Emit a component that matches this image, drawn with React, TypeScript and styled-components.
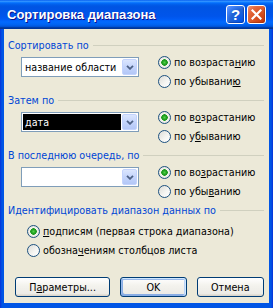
import React from "react";
import styled, { createGlobalStyle } from "styled-components";

const GlobalStyle = createGlobalStyle`
  html, body {
    margin: 0;
    padding: 0;
    background: #ffffff;
  }
  body {
    font-family: "DejaVu Sans Condensed", "DejaVu Sans", Verdana, sans-serif;
    font-size: 10.7px;
    color: #000000;
  }
  u {
    text-decoration: underline;
    text-underline-offset: 1px;
  }
`;

type RadioProps = {
  checked?: boolean;
  children: React.ReactNode;
};

const Radio = ({ checked, children }: RadioProps) => (
  <S.RadioRow>
    <S.RadioCircle checked={!!checked} />
    <S.RadioLabel>{children}</S.RadioLabel>
  </S.RadioRow>
);

type ComboProps = {
  value: string;
  selected?: boolean;
};

const Combo = ({ value, selected }: ComboProps) => (
  <S.Combo>
    <S.ComboText selected={!!selected}>{value}</S.ComboText>
    <S.ComboButton>
      <svg width="8" height="5" viewBox="0 0 8 5">
        <path d="M1 0.8 L4 3.8 L7 0.8" fill="none" stroke="#4d6185" strokeWidth="1.8" />
      </svg>
    </S.ComboButton>
  </S.Combo>
);

type SortGroupProps = {
  title: string;
  value: string;
  selected?: boolean;
  asc: React.ReactNode;
  desc: React.ReactNode;
};

const SortGroup = ({ title, value, selected, asc, desc }: SortGroupProps) => (
  <S.Group>
    <S.Header>
      <span>{title}</span>
      <S.Line />
    </S.Header>
    <S.SortRow>
      <Combo value={value} selected={selected} />
      <S.RadioColumn>
        <Radio checked>{asc}</Radio>
        <Radio>{desc}</Radio>
      </S.RadioColumn>
    </S.SortRow>
  </S.Group>
);

const App = () => {
  return (
    <>
      <GlobalStyle />
      <S.Window>
        <S.TitleBar>
          <S.Title>Сортировка диапазона</S.Title>
          <S.TitleButtons>
            <S.HelpButton>?</S.HelpButton>
            <S.CloseButton>
              <svg width="11" height="11" viewBox="0 0 11 11">
                <path d="M1.5 1.5 L9.5 9.5 M9.5 1.5 L1.5 9.5" stroke="#ffffff" strokeWidth="2.2" strokeLinecap="square" />
              </svg>
            </S.CloseButton>
          </S.TitleButtons>
        </S.TitleBar>
        <S.Body>
          <SortGroup
            title="Сортировать по"
            value="название области"
            asc={<>по возраста<u>н</u>ию</>}
            desc={<>по убывани<u>ю</u></>}
          />
          <SortGroup
            title="Затем по"
            value="дата"
            selected
            asc={<>по в<u>о</u>зрастанию</>}
            desc={<>по у<u>б</u>ыванию</>}
          />
          <SortGroup
            title="В последнюю очередь, по"
            value=""
            asc={<>по во<u>з</u>растанию</>}
            desc={<>по убы<u>в</u>анию</>}
          />
          <S.Group>
            <S.Header>
              <span>Идентифицировать диапазон данных по</span>
              <S.Line />
            </S.Header>
            <S.IdentColumn>
              <Radio checked>
                <u>п</u>одписям (первая строка диапазона)
              </Radio>
              <Radio>
                обозна<u>ч</u>ениям столбцов листа
              </Radio>
            </S.IdentColumn>
          </S.Group>
          <S.ButtonRow>
            <S.Button width={96}>
              П<u>а</u>раметры...
            </S.Button>
            <S.Button width={67} isDefault>
              OK
            </S.Button>
            <S.Button width={68}>Отмена</S.Button>
          </S.ButtonRow>
        </S.Body>
      </S.Window>
    </>
  );
};

const S = {
  Window: styled.div`
    width: 273px;
    height: 308px;
    display: flex;
    flex-direction: column;
    background: linear-gradient(90deg, #0831d9 0px, #0055e5 2px, #0055e5 271px, #0831d9 273px);
    box-sizing: border-box;
  `,
  TitleBar: styled.div`
    height: 29px;
    flex-shrink: 0;
    display: flex;
    align-items: center;
    justify-content: space-between;
    padding: 0 7px 0 7px;
    background: linear-gradient(
      180deg,
      #0058ee 0%,
      #3593ff 4%,
      #288eff 6%,
      #127dff 8%,
      #036ffc 10%,
      #0262ee 14%,
      #0057e5 20%,
      #0054e3 24%,
      #0055eb 56%,
      #005bf5 66%,
      #026afe 76%,
      #0062ef 86%,
      #0052d6 92%,
      #0040ab 94%,
      #003092 100%
    );
  `,
  Title: styled.div`
    font-family: "Liberation Sans", Arial, sans-serif;
    font-weight: bold;
    font-size: 13px;
    color: #ffffff;
    text-shadow: 1px 1px 0 #0f1089;
  `,
  TitleButtons: styled.div`
    display: flex;
    gap: 2px;
  `,
  HelpButton: styled.div`
    width: 19px;
    height: 19px;
    box-sizing: border-box;
    border: 1px solid #ffffff;
    border-radius: 3px;
    display: flex;
    align-items: center;
    justify-content: center;
    font-family: "Liberation Sans", Arial, sans-serif;
    font-weight: bold;
    font-size: 15px;
    color: #ffffff;
    background: radial-gradient(circle at 90% 90%, #0054e9 0%, #2263d5 55%, #4382f8 80%, #6d9bfa 100%);
    box-shadow: inset -1px -1px 1px rgba(0, 30, 120, 0.4);
  `,
  CloseButton: styled.div`
    width: 19px;
    height: 19px;
    box-sizing: border-box;
    border: 1px solid #ffffff;
    border-radius: 3px;
    display: flex;
    align-items: center;
    justify-content: center;
    background: radial-gradient(circle at 90% 90%, #c93b0d 0%, #dc5a2a 55%, #e56a40 75%, #f0997a 100%);
    box-shadow: inset -1px -1px 1px rgba(120, 30, 0, 0.4);
  `,
  Body: styled.div`
    flex: 1;
    margin: 0 4px 5px 4px;
    padding: 10px 5px 0 4px;
    background: #ece9d8;
    display: flex;
    flex-direction: column;
  `,
  Group: styled.div`
    display: flex;
    flex-direction: column;
    margin-bottom: 3px;
  `,
  Header: styled.div`
    height: 12px;
    display: flex;
    align-items: center;
    gap: 4px;
    color: #0046d5;
    white-space: nowrap;
  `,
  Line: styled.div`
    flex: 1;
    height: 1px;
    margin-top: 1px;
    background: #d0d0bf;
  `,
  SortRow: styled.div`
    display: flex;
    height: 38px;
    margin-top: 2px;
    padding-left: 13px;
  `,
  Combo: styled.div`
    width: 118px;
    height: 20px;
    margin-top: 4px;
    box-sizing: border-box;
    border: 1px solid #7f9db9;
    background: #ffffff;
    display: flex;
    align-items: stretch;
    padding: 1px;
  `,
  ComboText: styled.div<{ selected: boolean }>`
    flex: 1;
    display: flex;
    align-items: center;
    padding-left: 2px;
    margin-right: 1px;
    white-space: nowrap;
    overflow: hidden;
    background: ${({ selected }) => (selected ? "#000000" : "transparent")};
    color: ${({ selected }) => (selected ? "#ffffff" : "#000000")};
  `,
  ComboButton: styled.div`
    width: 15px;
    box-sizing: border-box;
    border: 1px solid #c3d3fd;
    border-radius: 2px;
    display: flex;
    align-items: center;
    justify-content: center;
    background: linear-gradient(180deg, #dbe6fe 0%, #c6d6fc 45%, #b3c7f7 100%);
  `,
  RadioColumn: styled.div`
    display: flex;
    flex-direction: column;
    margin-left: 19px;
  `,
  IdentColumn: styled.div`
    display: flex;
    flex-direction: column;
    margin-top: 6px;
    padding-left: 19px;
  `,
  RadioRow: styled.div`
    height: 19px;
    display: flex;
    align-items: center;
    white-space: nowrap;
  `,
  RadioCircle: styled.div<{ checked: boolean }>`
    width: 13px;
    height: 13px;
    box-sizing: border-box;
    border-radius: 50%;
    border: 1px solid #1c5180;
    flex-shrink: 0;
    background: ${({ checked }) =>
      checked
        ? "radial-gradient(circle at 50% 50%, #55d04a 0px, #21a121 2px, #1f9a1f 3px, #f4f4f0 3.5px, #e2e2db 6px)"
        : "linear-gradient(135deg, #dcdcd7 0%, #f6f6f3 60%, #ffffff 100%)"};
  `,
  RadioLabel: styled.span`
    margin-left: 3px;
  `,
  ButtonRow: styled.div`
    display: flex;
    gap: 10px;
    margin-top: 14px;
    padding-left: 7px;
  `,
  Button: styled.div<{ width: number; isDefault?: boolean }>`
    width: ${({ width }) => width}px;
    height: 20px;
    box-sizing: border-box;
    border: 1px solid #003c74;
    border-radius: 3px;
    display: flex;
    align-items: center;
    justify-content: center;
    background: linear-gradient(180deg, #ffffff 0%, #f4f3ee 40%, #ecebe6 86%, #d6d0c5 100%);
    box-shadow: ${({ isDefault }) =>
      isDefault
        ? "inset -1px 1px #cee7ff, inset 1px 2px #98b8ea, inset -2px 0 #bcd4f6, inset 1px -1px #89ade4, inset 2px -2px #89ade4"
        : "none"};
  `,
};

export default App;
